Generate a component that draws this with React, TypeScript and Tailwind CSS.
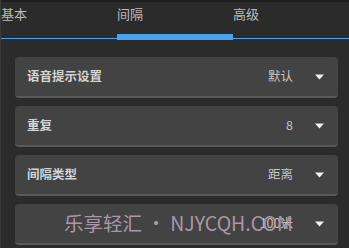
import React from "react";

const rows = [
  { label: "语音提示设置", value: "默认" },
  { label: "重复", value: "8" },
  { label: "间隔类型", value: "距离" },
  { label: "", value: "100米" },
];

const tabs = ["基本", "间隔", "高级"];

export default function App() {
  return (
    <div
      className="relative w-[349px] h-[248px] overflow-hidden bg-[#2b2b2b] border-l border-[#3a3a3a]"
      style={{ fontFamily: '"Noto Sans CJK SC", "Noto Sans", sans-serif' }}
    >
      <div className="h-[2px] bg-[#1e1e1e]" />
      {/* Tab bar */}
      <div className="relative h-[37px] flex border-b-[1.5px] border-[#4aa3ea]">
        {tabs.map((t, i) => (
          <div key={t} className="relative w-[117px] pt-[3px] text-[13px] leading-[18px] text-[#bcbcbc]">
            {t}
            {i === 1 && <div className="absolute left-0 right-0 bottom-[-2px] h-[6px] bg-[#4aa3ea]" />}
          </div>
        ))}
      </div>

      {/* Settings list */}
      <div className="flex flex-col gap-[8px] pt-[18px] pl-[14px] pr-[11px]">
        {rows.map((r, i) => (
          <div
            key={i}
            className="h-[41px] shrink-0 flex items-center rounded-[4px] bg-[#434343] border-b-2 border-[#585858] pl-[12px] pr-[14px]"
          >
            <span className="flex-1 text-[12.5px] font-semibold text-[#d4d4d4]">{r.label}</span>
            <span className="text-[12.5px] text-[#c4c4c4]">{r.value}</span>
            <svg width="9" height="6" viewBox="0 0 9 6" className="ml-[22px]">
              <path d="M0 0.5h9L4.5 5.5z" fill="#f2f2f2" />
            </svg>
          </div>
        ))}
      </div>

      {/* Watermark overlay (overlaps the last row in the reference too) */}
      <div className="absolute left-[63px] top-[209px] text-[19.5px] leading-[28px] text-[#a898a8] whitespace-nowrap">
        乐享轻汇 • NJYCQH.COM
      </div>
    </div>
  );
}
